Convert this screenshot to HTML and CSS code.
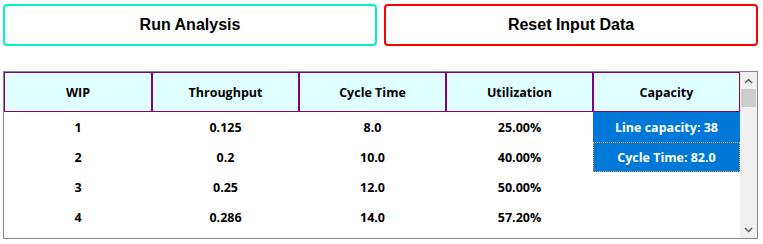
FILE: index.html
```html
<!DOCTYPE html>
<html>
<head>
<meta charset="utf-8">
<link rel="stylesheet" href="styles.css">
</head>
<body>
<div class="actions">
  <button class="btn btn-run">Run Analysis</button>
  <button class="btn btn-reset">Reset Input Data</button>
</div>
<div class="grid-box">
  <div class="grid">
    <div class="hd">WIP</div>
    <div class="hd">Throughput</div>
    <div class="hd">Cycle Time</div>
    <div class="hd">Utilization</div>
    <div class="hd">Capacity</div>

    <div class="cell">1</div>
    <div class="cell">0.125</div>
    <div class="cell">8.0</div>
    <div class="cell">25.00%</div>
    <div class="cell cap">Line capacity: 38</div>

    <div class="cell">2</div>
    <div class="cell">0.2</div>
    <div class="cell">10.0</div>
    <div class="cell">40.00%</div>
    <div class="cell cap focus">Cycle Time: 82.0</div>

    <div class="cell">3</div>
    <div class="cell">0.25</div>
    <div class="cell">12.0</div>
    <div class="cell">50.00%</div>
    <div class="cell"></div>

    <div class="cell">4</div>
    <div class="cell">0.286</div>
    <div class="cell">14.0</div>
    <div class="cell">57.20%</div>
    <div class="cell"></div>
  </div>
  <div class="scrollbar">
    <div class="arrow"><svg width="9" height="6" viewBox="0 0 9 6"><path d="M1 5 L4.5 1.5 L8 5" fill="none" stroke="#606060" stroke-width="1.5"/></svg></div>
    <div class="track"><div class="thumb"></div></div>
    <div class="arrow"><svg width="9" height="6" viewBox="0 0 9 6"><path d="M1 1 L4.5 4.5 L8 1" fill="none" stroke="#606060" stroke-width="1.5"/></svg></div>
  </div>
</div>
</body>
</html>
```
FILE: styles.css
```css
html, body {
  margin: 0;
  padding: 0;
  background: #ffffff;
}

body {
  font-family: "Open Sans", "Noto Sans", sans-serif;
  color: #000;
}

.actions {
  display: grid;
  grid-template-columns: 374px 374px;
  column-gap: 7px;
  padding: 4px 0 0 3px;
}

.btn {
  height: 42px;
  border: 2px solid;
  border-radius: 4px;
  background: #ffffff;
  color: #000;
  font-family: "Liberation Sans", Arial, sans-serif;
  font-weight: 700;
  font-size: 16px;
  padding: 0;
  margin: 0;
}

.btn-run {
  border-color: #00f2c8;
}

.btn-reset {
  border-color: #ff0000;
}

.grid-box {
  margin: 25px 0 0 3px;
  width: 755px;
  height: 168px;
  box-sizing: border-box;
  border: 1px solid #828790;
  display: flex;
}

.grid {
  width: 736px;
  display: grid;
  grid-template-columns: 148px repeat(4, 147px);
  grid-template-rows: 40px;
  grid-auto-rows: 30px;
  align-content: start;
}

.hd {
  background: #e0ffff;
  border: 1px solid #800080;
  display: flex;
  align-items: center;
  justify-content: center;
  font-weight: 700;
  font-size: 12.5px;
}

.cell {
  display: flex;
  align-items: center;
  justify-content: center;
  font-weight: 700;
  font-size: 12.5px;
}

.cap {
  background: #0078d7;
  color: #ffffff;
}

.focus {
  outline: 1px dotted #e8a050;
  outline-offset: -1px;
}

.scrollbar {
  width: 17px;
  background: #f0f0f0;
  display: flex;
  flex-direction: column;
}

.arrow {
  height: 17px;
  display: flex;
  align-items: center;
  justify-content: center;
}

.track {
  flex: 1;
}

.thumb {
  height: 18px;
  margin: 0 1px;
  background: #cdcdcd;
}
```
